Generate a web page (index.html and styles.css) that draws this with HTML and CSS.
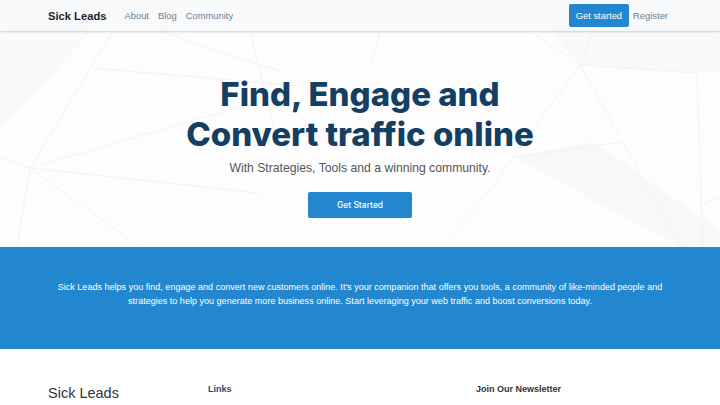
FILE: index.html
```html
<!DOCTYPE html>
<html lang="en">
<head>
<meta charset="utf-8">
<title>Sick Leads</title>
<link rel="stylesheet" href="styles.css">
</head>
<body>
<header class="navbar">
  <div class="nav-left">
    <a class="brand" href="#">Sick Leads</a>
    <nav class="nav-links">
      <a href="#">About</a>
      <a href="#">Blog</a>
      <a href="#">Community</a>
    </nav>
  </div>
  <div class="nav-right">
    <a class="btn-nav" href="#">Get started</a>
    <a class="nav-register" href="#">Register</a>
  </div>
</header>

<section class="hero">
  <svg class="hero-bg" viewBox="0 0 720 216" preserveAspectRatio="none" aria-hidden="true">
    <polygon points="593,111 515,126 680,216 720,216 720,200" fill="#f4f5f6" opacity="0.7"/>
    <polygon points="550,0 720,0 720,42 697,42 580,34" fill="#f6f7f8" opacity="0.6"/>
    <polygon points="0,0 90,0 0,96" fill="#f7f8f9" opacity="0.6"/>
    <g stroke="#f1f2f3" stroke-width="1" fill="none">
      <line x1="90" y1="0" x2="0" y2="96"/>
      <line x1="113" y1="0" x2="30" y2="137"/>
      <line x1="30" y1="137" x2="0" y2="126"/>
      <line x1="30" y1="137" x2="260" y2="162"/>
      <line x1="93" y1="37" x2="300" y2="55"/>
      <line x1="30" y1="137" x2="260" y2="70"/>
      <line x1="30" y1="137" x2="17" y2="216"/>
      <line x1="30" y1="137" x2="140" y2="216"/>
      <line x1="580" y1="34" x2="530" y2="0"/>
      <line x1="580" y1="34" x2="593" y2="0"/>
      <line x1="580" y1="34" x2="697" y2="42"/>
      <line x1="580" y1="34" x2="623" y2="111"/>
      <line x1="623" y1="111" x2="680" y2="216"/>
      <line x1="580" y1="34" x2="480" y2="172"/>
      <line x1="623" y1="111" x2="515" y2="126"/>
      <line x1="697" y1="42" x2="703" y2="216"/>
      <line x1="697" y1="176" x2="720" y2="166"/>
      <line x1="480" y1="172" x2="440" y2="216"/>
      <line x1="250" y1="0" x2="280" y2="120"/>
      <line x1="380" y1="0" x2="372" y2="30"/>
      <line x1="160" y1="0" x2="280" y2="40"/>
    </g>
  </svg>
  <div class="hero-content">
    <h1 class="hero-title">Find, Engage and<br>Convert traffic online</h1>
    <p class="hero-sub">With Strategies, Tools and a winning community.</p>
    <a class="btn-hero" href="#">Get Started</a>
  </div>
</section>

<section class="about">
  <p class="about-text">Sick Leads helps you find, engage and convert new customers online. It's your companion that offers you tools, a community of like-minded people and strategies to help you generate more business online. Start leveraging your web traffic and boost conversions today.</p>
</section>

<footer class="footer">
  <div class="footer-brand">Sick Leads</div>
  <div class="footer-col">
    <h4 class="footer-links-title">Links</h4>
  </div>
  <div class="footer-col">
    <h4 class="footer-news-title">Join Our Newsletter</h4>
  </div>
</footer>
</body>
</html>
```

FILE: styles.css
```css
* { box-sizing: border-box; }
html, body { margin: 0; padding: 0; }
body {
  font-family: "Liberation Sans", Arial, sans-serif;
  background: #fff;
  color: #212529;
  overflow: hidden;
}
a { text-decoration: none; }

.navbar {
  height: 31px;
  background: #f8f9fa;
  display: flex;
  align-items: center;
  justify-content: space-between;
  padding: 0 52px 0 48px;
  box-shadow: 0 1px 2px rgba(0,0,0,0.18);
  position: relative;
  z-index: 2;
}
.nav-left { display: flex; align-items: center; }
.brand {
  font-size: 11.2px;
  font-weight: 700;
  color: #212529;
  margin-right: 18px;
}
.nav-links { display: flex; gap: 9px; }
.nav-links a, .nav-register {
  font-size: 9.4px;
  color: #6c7f96;
}
.nav-right { display: flex; align-items: center; gap: 4px; }
.btn-nav {
  background: #2387cf;
  color: #fff;
  font-size: 9.4px;
  height: 23px;
  line-height: 23px;
  padding: 0 7px;
  border-radius: 2px;
}

.hero {
  position: relative;
  height: 216px;
  background: #fdfdfd;
  overflow: hidden;
}
.hero-bg {
  position: absolute;
  inset: 0;
  width: 100%;
  height: 100%;
}
.hero-content {
  position: relative;
  display: flex;
  flex-direction: column;
  align-items: center;
  padding-top: 43px;
}
.hero-title {
  margin: 0;
  font-family: Inter, "Noto Sans", sans-serif;
  font-weight: 800;
  font-size: 33px;
  line-height: 40px;
  color: #123f63;
  text-align: center;
}
.hero-sub {
  margin: 7px 0 0;
  font-size: 12.2px;
  color: #555;
}
.btn-hero {
  margin-top: 17px;
  width: 104px;
  height: 26px;
  line-height: 26px;
  text-align: center;
  background: #2387cf;
  color: #fff;
  font-family: Inter, "Noto Sans", sans-serif;
  font-size: 8.5px;
  font-weight: 500;
  border-radius: 2px;
}

.about {
  background: #2387cf;
  height: 102px;
  display: flex;
  align-items: center;
  justify-content: center;
  padding: 0 48px 9px;
}
.about-text {
  margin: 0;
  max-width: 624px;
  color: #fff;
  font-size: 9.05px;
  line-height: 14px;
  text-align: center;
}

.footer {
  display: grid;
  grid-template-columns: 160px 268px 1fr;
  padding: 35px 48px 0;
}
.footer-brand {
  font-size: 14.5px;
  color: #333;
  padding-top: 1px;
}
.footer-col h4 { margin: 0; font-size: 9px; font-weight: 700; }
.footer-links-title { color: #1d4c75; }
.footer-news-title { color: #333; }
```
